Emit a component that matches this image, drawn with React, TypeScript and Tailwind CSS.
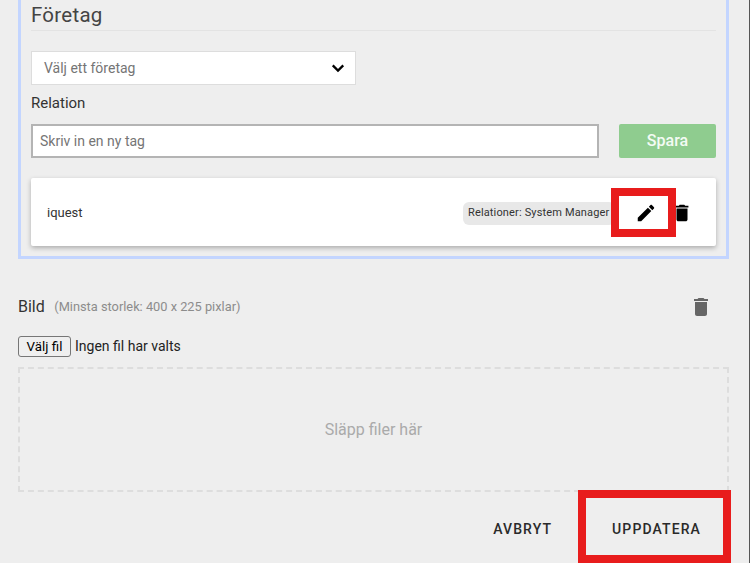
import React from "react";

const Trash = ({ className }: { className: string }) => (
  <svg viewBox="0 0 24 24" className={className} fill="currentColor">
    <path d="M6 19c0 1.1.9 2 2 2h8c1.1 0 2-.9 2-2V7H6v12zM19 4h-3.5l-1-1h-5l-1 1H5v2h14V4z" />
  </svg>
);

const Pencil = ({ className }: { className: string }) => (
  <svg viewBox="0 0 24 24" className={className} fill="currentColor">
    <path d="M3 17.25V21h3.75L17.81 9.94l-3.75-3.75L3 17.25zM20.71 7.04c.39-.39.39-1.02 0-1.41l-2.34-2.34c-.39-.39-1.02-.39-1.41 0l-1.83 1.83 3.75 3.75 1.83-1.83z" />
  </svg>
);

export default function App() {
  return (
    <div className="relative w-[750px] h-[563px] overflow-hidden bg-[#eeeeee] border-r border-[#555555] font-['Roboto',sans-serif]">
      <div className="w-[711px] ml-[18px] -mt-[40px] h-[299px] border-[3px] border-[#c3d5ff] px-[10px] pt-[37px]">
        <h2 className="h-[31px] text-[20.5px] leading-[30px] text-[#444444] border-b border-[#e3e3e3] tracking-[0.25px]">Företag</h2>
        <div className="mt-[20px] w-[325px] h-[34px] bg-white border border-[#dddddd] flex items-center justify-between pl-[12px] pr-[8px] text-[14px] text-[#757575]">
          <span>Välj ett företag</span>
          <svg viewBox="0 0 24 24" className="w-[18px] h-[18px] text-black" fill="none" stroke="currentColor" strokeWidth="3">
            <path d="M5 8.5l7 7 7-7" />
          </svg>
        </div>
        <div className="mt-[8px] text-[15px] leading-[20px] text-[#333333]">Relation</div>
        <div className="mt-[11px] flex justify-between h-[34px]">
          <div className="w-[568px] bg-white border-2 border-[#b4b4b4] flex items-center pl-[7px] text-[14px] text-[#757575]">Skriv in en ny tag</div>
          <button className="w-[97px] rounded-[2px] bg-[#8fcc8f] text-[#f4fbf4] text-[16px] font-medium">Spara</button>
        </div>
        <div className="mt-[20px] h-[68px] bg-white rounded-[2px] shadow-[0_2px_5px_rgba(0,0,0,0.28)] flex items-center pl-[16px] pt-[2px]">
          <span className="text-[13px] text-[#333333]">iquest</span>
          <span className="ml-auto h-[23px] w-[152px] rounded-[6px] bg-[#e8e8e8] pl-[5px] flex items-center text-[11px] tracking-[0.15px] text-[#333333]">Relationer: System Manager</span>
          <Pencil className="ml-[20px] w-[22px] h-[22px] text-black" />
          <Trash className="ml-[14px] mr-[23px] w-[22px] h-[22px] text-black" />
        </div>
      </div>

      <div className="mx-[18px] w-[711px]">
        <div className="mt-[36px] h-[24px] flex items-center">
          <span className="text-[16px] text-[#333333]">Bild</span>
          <span className="ml-[9.5px] text-[12.8px] text-[#8c8c8c]">(Minsta storlek: 400 x 225 pixlar)</span>
          <Trash className="ml-auto mr-[16px] w-[24px] h-[24px] text-[#666666]" />
        </div>
        <div className="mt-[17px] h-[21px] flex items-center">
          <button className="h-[21px] w-[53px] border border-[#767676] rounded-[3px] bg-[#efefef] text-[13.33px] text-black">Välj fil</button>
          <span className="ml-[4px] text-[14px] text-[#222222]">Ingen fil har valts</span>
        </div>
        <div className="mt-[10px] h-[125px] border-2 border-dashed border-[#dddddd] flex items-center justify-center text-[16px] text-[#aaaaaa]">Släpp filer här</div>
        <div className="flex justify-end items-center mt-[21px] h-[33px] text-[14px] font-medium tracking-[1.1px] text-[#2a2a2a]">
          <button className="mr-[60px]">AVBRYT</button>
          <button className="mr-[28px]">UPPDATERA</button>
        </div>
      </div>

      <div className="absolute left-[611px] top-[188px] w-[65px] h-[49px] border-[8px] border-[#e81c1c]" />
      <div className="absolute left-[578px] top-[490px] w-[153px] h-[73px] border-[8px] border-[#e81c1c]" />
    </div>
  );
}
